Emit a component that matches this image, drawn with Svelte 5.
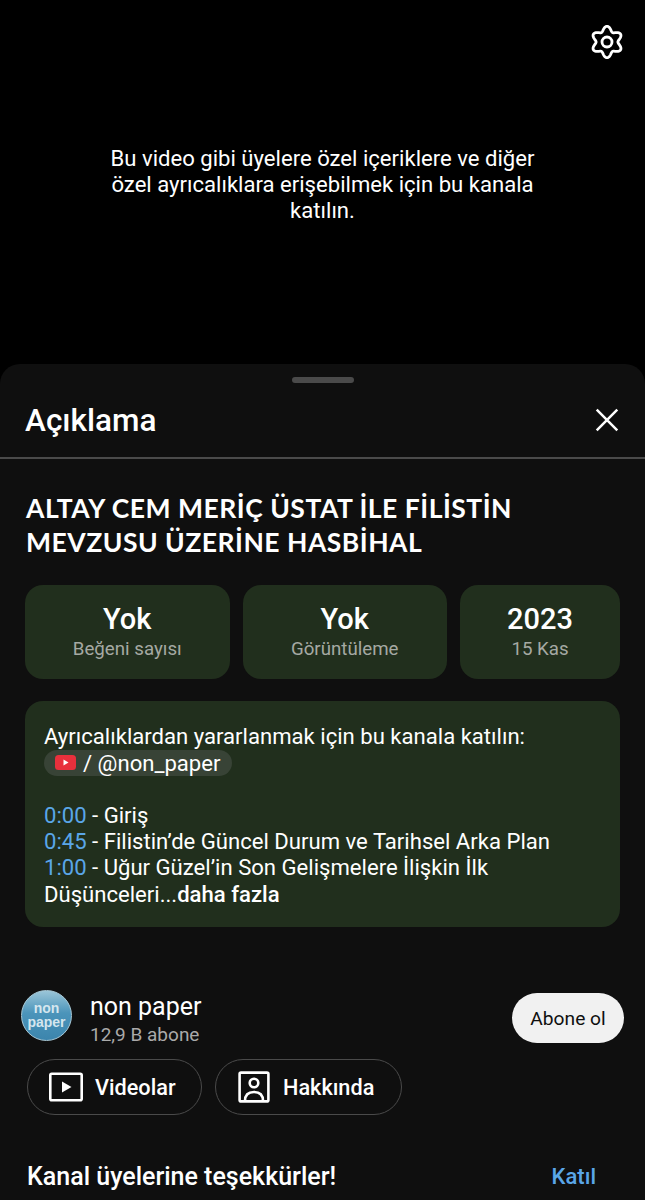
<script>
  const stats = [
    { v: 'Yok', l: 'Beğeni sayısı', c: 'a' },
    { v: 'Yok', l: 'Görüntüleme', c: 'a' },
    { v: '2023', l: '15 Kas', c: 'b' }
  ];
  const gearPath =
    Array.from({ length: 180 }, (_, i) => {
      const t = (i * 2 * Math.PI) / 180;
      const r = 13.3 + 2.4 * Math.cos(6 * t);
      const x = 18 + r * Math.sin(t);
      const y = 18 - r * Math.cos(t);
      return `${i ? 'L' : 'M'}${x.toFixed(2)} ${y.toFixed(2)}`;
    }).join('') + 'Z';
</script>

<div class="page">
  <div class="player">
    <svg class="gear" viewBox="0 0 36 36" width="36" height="36" fill="none" stroke="#fff" stroke-width="2.8">
      <path d={gearPath} />
      <circle cx="18" cy="18" r="5" />
    </svg>
    <p class="msg">Bu video gibi üyelere özel içeriklere ve diğer<br />özel ayrıcalıklara erişebilmek için bu kanala<br />katılın.</p>
  </div>
  <div class="sheet">
    <div class="handle"></div>
    <div class="head">
      <h2>Açıklama</h2>
      <svg viewBox="0 0 24 24" width="26" height="26" stroke="#fff" stroke-width="2.3" fill="none"><path d="M2.5 2.5l19 19M21.5 2.5l-19 19"/></svg>
    </div>
    <div class="body">
      <h1>ALTAY CEM MERİÇ ÜSTAT İLE FİLİSTİN<br />MEVZUSU ÜZERİNE HASBİHAL</h1>
      <div class="stats">
        {#each stats as s}
          <div class="stat {s.c}"><b>{s.v}</b><span>{s.l}</span></div>
        {/each}
      </div>
      <div class="desc">
        <div>Ayrıcalıklardan yararlanmak için bu kanala katılın:</div>
        <div class="chipline"><span class="chip">
          <svg viewBox="0 0 21 15" width="21" height="15"><rect width="21" height="15" rx="3.5" fill="#e8303c"/><path d="M8.5 4.500v6l5-3z" fill="#fff"/></svg>
          <span>/ @non_paper</span></span></div>
        <div class="blank"></div>
        <div><a>0:00</a> - Giriş</div>
        <div><a>0:45</a> - Filistin’de Güncel Durum ve Tarihsel Arka Plan</div>
        <div><a>1:00</a> - Uğur Güzel’in Son Gelişmelere İlişkin İlk</div>
        <div>Düşünceleri...<strong>daha fazla</strong></div>
      </div>
      <div class="channel">
        <div class="avatar"><span>non<br />paper</span></div>
        <div class="cinfo"><div class="cname">non paper</div><div class="csubs">12,9 B abone</div></div>
        <button class="sub">Abone ol</button>
      </div>
      <div class="pills">
        <div class="pill vid">
          <svg viewBox="0 0 34 30" width="34" height="30" fill="none" stroke="#fff" stroke-width="2.6"><rect x="1.3" y="1.8" width="31.4" height="26.4" rx="1.5"/><path d="M13 9.500v11l9.500-5.500z" fill="#fff" stroke="none"/></svg>
          Videolar
        </div>
        <div class="pill abt">
          <svg viewBox="0 0 32 32" width="32" height="32" fill="none" stroke="#fff" stroke-width="2.6"><rect x="1.6" y="1.6" width="28.8" height="28.8" rx="1.5"/><circle cx="16" cy="12" r="4.3"/><path d="M7 30c0-6 3.500-9 9-9s9 3 9 9"/></svg>
          Hakkında
        </div>
      </div>
      <div class="thanks"><span>Kanal üyelerine teşekkürler!</span><a>Katıl</a></div>
    </div>
  </div>
</div>

<style>
  :global(body) { margin: 0; background: #000; }
  .page { width: 645px; height: 1200px; overflow: hidden; background: #000; color: #fff; font-family: Roboto, "Noto Sans", sans-serif; display: flex; flex-direction: column; }
  .player { height: 364px; flex: none; position: relative; display: flex; justify-content: center; }
  .gear { position: absolute; top: 24px; right: 20px; }
  .msg { margin: 145px 0 0; font-size: 22.1px; line-height: 26px; text-align: center; }
  .sheet { flex: 1; background: #0f0f0f; border-radius: 20px 20px 0 0; position: relative; }
  .handle { width: 62px; height: 6px; border-radius: 3px; background: #4a4a4a; margin: 13px auto 0; }
  .head { height: 76px; display: flex; align-items: center; justify-content: space-between; padding: 0 25px; border-bottom: 2px solid #4a4a4a; box-sizing: border-box; }
  h2 { font-size: 31.5px; font-weight: 500; margin: 0; }
  .body { padding: 0 25px; }
  h1 { font-family: Lato, "Noto Sans", sans-serif; font-size: 26.5px; line-height: 34px; font-weight: 700; margin: 32px 0 0 1px; letter-spacing: .5px; }
  .stats { display: flex; gap: 13px; margin-top: 26px; }
  .stat { height: 94px; border-radius: 18px; background: #212f1d; display: flex; flex-direction: column; align-items: center; justify-content: center; box-sizing: border-box; }
  .stat.a { width: 204.5px; }
  .stat.b { width: 160px; }
  .stat b { font-size: 29px; font-weight: 500; line-height: 36px; margin-top: -3px; }
  .stat span { font-size: 18.7px; color: #a5a9a3; line-height: 24px; }
  .desc { margin-top: 22px; width: 595px; box-sizing: border-box; height: 226px; background: #212f1d; border-radius: 18px; padding: 22px 19px; font-size: 22.1px; line-height: 26.3px; }
  .desc a { color: #5aa6e8; }
  .desc strong { font-weight: 500; }
  .blank { height: 26.3px; }
  .chip { display: inline-flex; align-items: center; gap: 7px; background: #384336; border-radius: 14px; padding: 0 12px 0 11px; height: 26px; }
  .chipline { height: 26.3px; }
  .channel { display: flex; align-items: center; margin: 61px -4px 0 -4px; height: 60px; }
  .avatar { width: 51px; height: 51px; box-sizing: border-box; flex: none; border: 1px solid #a9cad8; border-radius: 50%; background: linear-gradient(#9ac5d8, #4b94ba 45%, #3c85ad); display: flex; align-items: center; justify-content: center; font-family: "Liberation Sans", sans-serif; font-size: 14px; line-height: 14px; text-align: center; font-weight: 700; color: #d5e6ee; margin: -6px 18px 0 0; }
  .cinfo { flex: 1; margin-top: 3px; }
  .cname { font-size: 25px; line-height: 30px; }
  .csubs { font-size: 19px; color: #aaa; line-height: 26px; }
  .sub { width: 112px; height: 50px; border-radius: 25px; border: 0; background: #f1f1f1; color: #0f0f0f; font: 400 19.2px Roboto, sans-serif; padding: 0; }
  .pills { display: flex; gap: 13px; margin: 11px 0 0 2px; }
  .pill { height: 56px; box-sizing: border-box; border: 1.5px solid #4a4a4a; border-radius: 28px; display: flex; align-items: center; font-size: 21.7px; font-weight: 500; }
  .vid { width: 175px; padding-left: 21px; gap: 12px; }
  .abt { width: 187px; padding-left: 22px; gap: 13px; }
  .thanks { display: flex; justify-content: space-between; align-items: center; margin: 47px 24px 0 2px; font-size: 25px; font-weight: 500; }
  .thanks a { color: #5aa6e8; font-size: 22px; }
</style>
